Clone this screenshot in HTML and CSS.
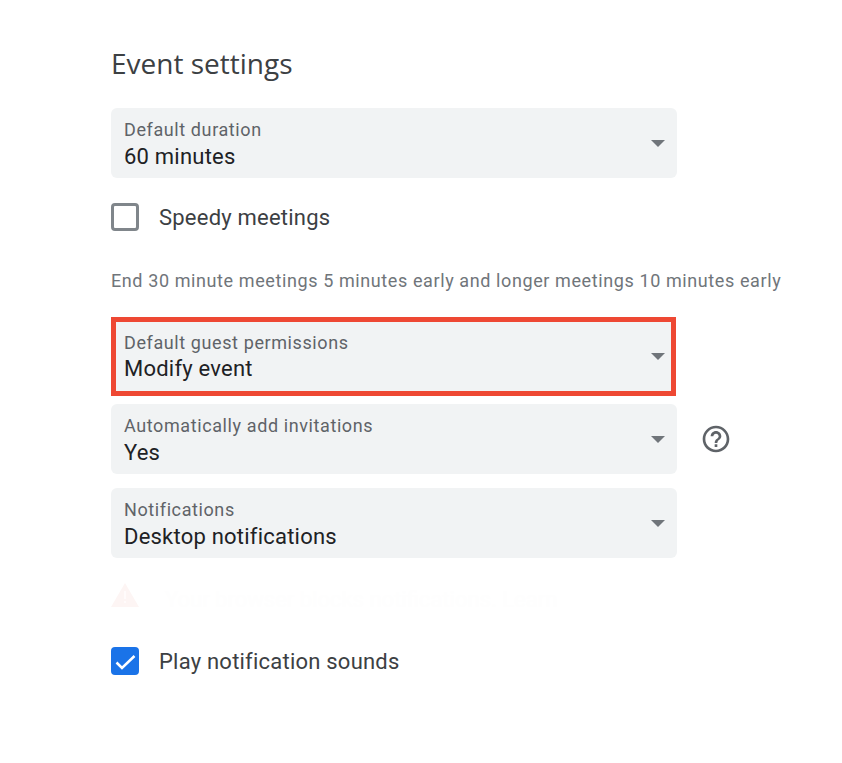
FILE: index.html
```html
<!DOCTYPE html>
<html lang="en">
<head>
    <meta charset="UTF-8">
    <meta name="viewport" content="width=device-width, initial-scale=1.0">
    <title>Event settings</title>
    <link rel="stylesheet" href="styles.css">
</head>
<body>
    <main class="settings">
        <h1 class="settings-title">Event settings</h1>

        <div class="select select-duration">
            <div class="select-text">
                <span class="select-label">Default duration</span>
                <span class="select-value">60 minutes</span>
            </div>
            <span class="select-arrow"></span>
        </div>

        <label class="check check-speedy">
            <span class="check-box"></span>
            <span class="check-label">Speedy meetings</span>
        </label>

        <p class="hint">End 30 minute meetings 5 minutes early and longer meetings 10 minutes early</p>

        <div class="select select-marked">
            <div class="select-text">
                <span class="select-label">Default guest permissions</span>
                <span class="select-value">Modify event</span>
            </div>
            <span class="select-arrow"></span>
        </div>

        <div class="select-row">
            <div class="select">
                <div class="select-text">
                    <span class="select-label">Automatically add invitations</span>
                    <span class="select-value">Yes</span>
                </div>
                <span class="select-arrow"></span>
            </div>
            <svg class="help-icon" viewBox="0 0 24 24" width="32" height="32" aria-hidden="true">
                <path fill="#5f6368" d="M11 18h2v-2h-2v2zm1-16C6.480 2 2 6.480 2 12s4.480 10 10 10 10-4.480 10-10S17.520 2 12 2zm0 18c-4.410 0-8-3.590-8-8s3.590-8 8-8 8 3.590 8 8-3.590 8-8 8zm0-14c-2.210 0-4 1.790-4 4h2c0-1.100.9-2 2-2s2 .9 2 2c0 2-3 1.750-3 5h2c0-2.250 3-2.500 3-5 0-2.210-1.790-4-4-4z"/>
            </svg>
        </div>

        <div class="select select-notify">
            <div class="select-text">
                <span class="select-label">Notifications</span>
                <span class="select-value">Desktop notifications</span>
            </div>
            <span class="select-arrow"></span>
        </div>

        <div class="warning">
            <svg class="warning-icon" viewBox="0 0 28 24" width="28" height="24" aria-hidden="true">
                <path fill="#fdf5f4" d="M14 0 28 24H0z"/>
                <path fill="#fffbfb" d="M13 8h2v8h-2zM13 18h2v2h-2z"/>
            </svg>
            <span class="warning-text">Your browser blocks notifications. Learn</span>
        </div>

        <label class="check check-sounds">
            <span class="check-box check-box-on">
                <svg viewBox="0 0 28 28" width="28" height="28" aria-hidden="true">
                    <path fill="none" stroke="#fff" stroke-width="2.500" d="M5.500 15.500 11 21 23.500 9"/>
                </svg>
            </span>
            <span class="check-label">Play notification sounds</span>
        </label>
    </main>
</body>
</html>
```

FILE: styles.css
```css
body {
    margin: 0;
    background-color: #fff;
    font-family: Roboto, "Liberation Sans", sans-serif;
    color: #3c4043;
}

.settings {
    width: 720px;
    padding: 45px 0 0 111px;
}

.settings-title {
    margin: 0 0 27px;
    font-family: "Open Sans", Roboto, sans-serif;
    font-size: 28px;
    font-weight: 400;
    line-height: 36px;
}

.select {
    box-sizing: border-box;
    display: flex;
    align-items: center;
    justify-content: space-between;
    width: 566px;
    height: 70px;
    padding: 0 12px 0 13px;
    background-color: #f1f3f4;
    border-radius: 6px;
}

.select-text {
    display: flex;
    flex-direction: column;
    gap: 1px;
    padding-top: 3px;
}

.select-label {
    font-size: 18px;
    letter-spacing: 0.6px;
    line-height: 24px;
    color: #5f6368;
}

.select-value {
    font-size: 22px;
    letter-spacing: 0.22px;
    line-height: 28px;
    color: #202124;
}

.select-arrow {
    width: 0;
    height: 0;
    border-left: 7px solid transparent;
    border-right: 7px solid transparent;
    border-top: 7px solid #70757a;
}

.select-marked {
    width: 565px;
    height: 79px;
    margin-bottom: 8px;
    padding: 0 6px 0 8px;
    border: 5px solid #ee4833;
    border-radius: 0;
}

.select-marked .select-text {
    gap: 0;
    padding-top: 0;
}

.select-row {
    display: flex;
    align-items: center;
    gap: 23px;
}

.help-icon {
    flex-shrink: 0;
}

.select-notify {
    margin-top: 14px;
}

.check {
    display: flex;
    align-items: center;
    gap: 20px;
    height: 28px;
}

.check-box {
    box-sizing: border-box;
    width: 28px;
    height: 28px;
    border: 3px solid #80868b;
    border-radius: 4px;
}

.check-box-on {
    border: 0;
    background-color: #1a73e8;
}

.check-box-on svg {
    display: block;
}

.check-label {
    padding-top: 2px;
    font-size: 22px;
    letter-spacing: 0.22px;
    line-height: 28px;
}

.check-speedy {
    margin-top: 25px;
}

.check-sounds {
    margin-top: 40px;
}

.hint {
    margin: 36px 0 22px;
    font-size: 18px;
    letter-spacing: 0.6px;
    line-height: 28px;
    color: #70757a;
    white-space: nowrap;
}

.warning {
    display: flex;
    align-items: center;
    gap: 26px;
    height: 24px;
    margin-top: 25px;
}

.warning-text {
    padding-top: 8px;
    font-size: 22px;
    color: #fefefe;
}
```
